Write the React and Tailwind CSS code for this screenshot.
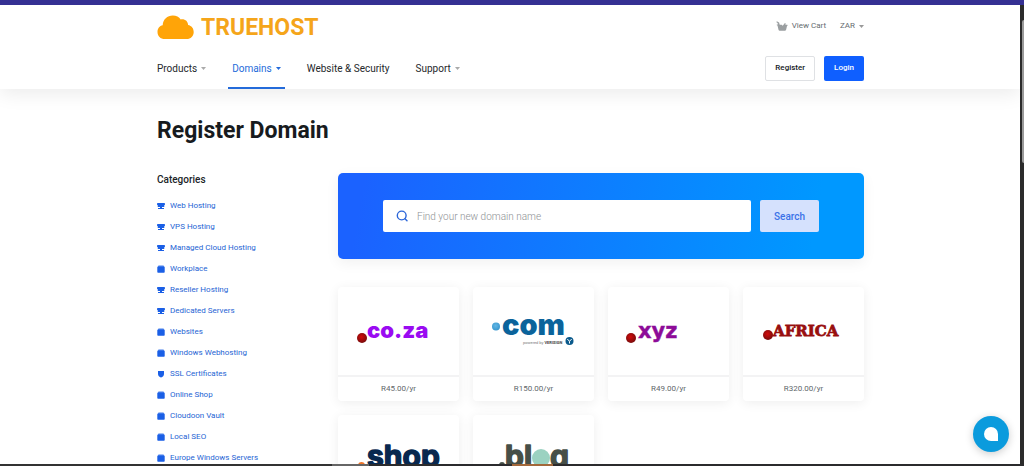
import React from "react";

const navItems = [
  { label: "Products", menu: true },
  { label: "Domains", menu: true, active: true },
  { label: "Website & Security" },
  { label: "Support", menu: true },
];

const categories = [
  { label: "Web Hosting", icon: "server" },
  { label: "VPS Hosting", icon: "server" },
  { label: "Managed Cloud Hosting", icon: "server" },
  { label: "Workplace", icon: "box" },
  { label: "Reseller Hosting", icon: "server" },
  { label: "Dedicated Servers", icon: "server" },
  { label: "Websites", icon: "box" },
  { label: "Windows Webhosting", icon: "box" },
  { label: "SSL Certificates", icon: "shield" },
  { label: "Online Shop", icon: "box" },
  { label: "Cloudoon Vault", icon: "box" },
  { label: "Local SEO", icon: "box" },
  { label: "Europe Windows Servers", icon: "box" },
];

function Caret({ className }) {
  return (
    <svg viewBox="0 0 5 3" className={`h-[3px] w-[5px] shrink-0 ${className}`} aria-hidden="true">
      <path d="M0 0h5L2.5 3z" fill="currentColor" />
    </svg>
  );
}

function CategoryIcon({ type }) {
  return (
    <svg viewBox="0 0 8 8" className="size-2 shrink-0" fill="#1a5fe6" aria-hidden="true">
      {type === "server" && (
        <>
          <rect x="0" y="1" width="8" height="2" rx="0.4" />
          <path d="M.7 3h6.600v1.500a.5.5 0 0 1-.5.5H5v1h2v1H1V6h2V5H1.200a.5.5 0 0 1-.5-.5z" />
        </>
      )}
      {type === "box" && (
        <>
          <path d="M1.500.5h5l1 1.400h-7z" opacity="0.8" />
          <rect x="0.3" y="1.8" width="7.4" height="5.900" rx="0.7" />
        </>
      )}
      {type === "shield" && <path d="M1 1h6v2.900c0 1.700-1.300 2.900-3 3.700C2.300 6.800 1 5.600 1 3.900z" />}
    </svg>
  );
}

function Ball({ id, cx, cy, r, from, to }) {
  return (
    <>
      <defs>
        <radialGradient id={id} cx="0.45" cy="0.4" r="0.6">
          <stop offset="0" stopColor={from} />
          <stop offset="1" stopColor={to} />
        </radialGradient>
      </defs>
      <circle cx={cx} cy={cy} r={r} fill={`url(#${id})`} />
    </>
  );
}

function CoZaLogo() {
  return (
    <>
      <Ball id="ball-coza" cx="24" cy="51" r="5" from="#d30b0b" to="#780c0c" />
      <text x="29" y="51" fontFamily="Inter, sans-serif" fontWeight="900" fontSize="22" fill="#9a0bf2">co.za</text>
    </>
  );
}

function ComLogo() {
  return (
    <>
      <Ball id="ball-com" cx="23" cy="39.500" r="4" from="#62b7e5" to="#3997ce" />
      <text x="29" y="48" fontFamily="Inter, sans-serif" fontWeight="900" fontSize="29" fill="#0b639b">com</text>
      <text x="50" y="57" fontFamily="Roboto, sans-serif" fontSize="4" fill="#777">
        powered by <tspan fontWeight="700" fill="#444">VERISIGN</tspan>
      </text>
      <circle cx="96.500" cy="54" r="4" fill="#0b5a8c" />
      <path d="M94.300 52l2.200 2.300 2.200-2.300M96.500 54.300v2.200" stroke="#fff" strokeWidth="1" fill="none" />
    </>
  );
}

function XyzLogo() {
  return (
    <>
      <Ball id="ball-xyz" cx="23" cy="51" r="5" from="#d30b0b" to="#780c0c" />
      <text x="30" y="51" fontFamily="DejaVu Sans, sans-serif" fontWeight="700" fontSize="21" fill="#8d0b98" stroke="#8d0b98" strokeWidth="0.4">xyz</text>
    </>
  );
}

function AfricaLogo() {
  return (
    <>
      <Ball id="ball-africa" cx="25" cy="48" r="5" from="#d30b0b" to="#780c0c" />
      <text x="30" y="49" fontFamily="DejaVu Serif, serif" fontWeight="700" fontSize="15" fill="#980f0f" stroke="#980f0f" strokeWidth="0.8">AFRICA</text>
    </>
  );
}

function ShopLogo() {
  return (
    <>
      <circle cx="23.500" cy="50.500" r="3.500" fill="#ee7428" />
      <text x="29" y="52" fontFamily="Inter, sans-serif" fontWeight="700" fontSize="30" fill="#08284f" stroke="#08284f" strokeWidth="1.400" strokeLinejoin="round">shop</text>
    </>
  );
}

function BlogLogo() {
  return (
    <>
      <circle cx="29" cy="50" r="3" fill="#464f47" />
      <g fontFamily="Inter, sans-serif" fontWeight="700" fontSize="30" fill="#464f47" stroke="#464f47" strokeWidth="1.400" strokeLinejoin="round">
        <text x="32" y="52">bl</text>
        <text x="77" y="52">g</text>
      </g>
      <circle cx="68" cy="43" r="9" fill="#9bd2c1" />
    </>
  );
}

const domains = [
  { name: ".co.za", price: "R45.00/yr", Logo: CoZaLogo },
  { name: ".com", price: "R150.00/yr", Logo: ComLogo },
  { name: ".xyz", price: "R49.00/yr", Logo: XyzLogo },
  { name: ".africa", price: "R320.00/yr", Logo: AfricaLogo },
  { name: ".shop", price: "", Logo: ShopLogo },
  { name: ".blog", price: "", Logo: BlogLogo },
];

function Header() {
  return (
    <header className="relative bg-white shadow-[0_5px_18px_rgba(0,0,0,0.08)]">
      <div className="mx-auto w-full max-w-[708px] pl-px">
        <div className="flex h-[42px] items-center justify-between">
          <a href="#home" className="flex items-center gap-[7px] pt-0.5 text-[#f5a51a]">
            <svg viewBox="0 0 37 24" className="h-6 w-[37px]" aria-hidden="true">
              <path
                d="M8 24C3.300 24 .5 21 .5 16.900c0-3.500 2-6.100 5.200-6.700C6 4.400 10.300.5 15.800.5c3.500 0 6.300 1.400 7.900 3.900 4-.9 7.300 1.700 7.400 5.600 3.500.7 5.600 3.400 5.600 6.900 0 4.100-2.900 7.100-7.200 7.100z"
                fill="#ffa408"
              />
            </svg>
            <span className="pt-0.5 font-[Roboto,sans-serif] text-[23px] leading-6 font-bold">TRUEHOST</span>
          </a>
          <div className="flex items-center gap-3.5 text-[8px] text-[#666c70]">
            <a href="#cart" className="flex items-center gap-1">
              <svg viewBox="0 0 12 10" className="h-2.5 w-3" fill="#9b9fa1" aria-hidden="true">
                <path d="M.8.3l2.300 1.200.6 2.300h2l1 .9 2.200-2.600 1 .7-.7 1h2.200l.2 1-.6.300-.9 3.700a1.300 1.300 0 0 1-1.200.9H3.700a1.300 1.300 0 0 1-1.200-.9L1.500 4.600l-.7-.3v-.9h1.100L1.600 2.100.4 1.300z" />
              </svg>
              View Cart
            </a>
            <button type="button" className="flex items-center gap-1">
              ZAR
              <Caret className="text-[#999]" />
            </button>
          </div>
        </div>
        <div className="flex h-[42px] items-stretch justify-between">
          <nav className="-ml-1 flex gap-[18px] text-[10px] text-[#25282b]">
            {navItems.map((item) => (
              <a
                key={item.label}
                href="#nav"
                className={
                  item.active
                    ? "flex items-center gap-1 border-y-2 border-t-transparent border-b-[#246bda] px-1 text-[#246bda]"
                    : "flex items-center gap-1 border-y-2 border-transparent px-1"
                }
              >
                {item.label}
                {item.menu && <Caret className={item.active ? "text-[#246bda]" : "text-[#aaa]"} />}
              </a>
            ))}
          </nav>
          <div className="flex items-center gap-[9px] text-[8px] font-medium">
            <button type="button" className="h-[25px] rounded-xs border border-[#dfe1e4] px-[9px] text-[#151a1e]">
              Register
            </button>
            <button type="button" className="h-[25px] rounded-xs bg-[#0f5fff] px-2.5 text-white">
              Login
            </button>
          </div>
        </div>
      </div>
    </header>
  );
}

function SearchBanner() {
  return (
    <form
      onSubmit={(event) => event.preventDefault()}
      className="flex items-center gap-[9px] rounded-[5px] bg-linear-[100deg,#1b62ff_5%,#0098ff_90%] px-[45px] py-[27px] shadow-[0_4px_14px_rgba(0,0,0,0.06)]"
    >
      <label className="flex h-8 min-w-0 flex-1 items-center gap-2 rounded-xs bg-white px-[13px]">
        <svg viewBox="0 0 13 13" className="size-[13px] shrink-0" fill="none" stroke="#2b66d9" strokeWidth="1.400" aria-hidden="true">
          <circle cx="5.700" cy="5.500" r="4.400" />
          <path d="M9 8.700l2 2" strokeLinecap="round" />
        </svg>
        <input
          type="text"
          aria-label="Domain name"
          placeholder="Find your new domain name"
          className="min-w-0 flex-1 bg-transparent text-[10px] font-light text-[#25282b] outline-none placeholder:text-[#8e9194]"
        />
      </label>
      <button type="submit" className="h-8 w-[59px] rounded-xs bg-[#d5e1fd] text-[10px] font-medium text-[#3b72e8]">
        Search
      </button>
    </form>
  );
}

export default function App() {
  return (
    <div className="flex h-screen flex-col overflow-hidden bg-white font-[Roboto,sans-serif]">
      <div className="h-[5px] shrink-0 bg-[#353093]" />
      <div className="relative flex min-h-0 flex-1">
        <div className="min-w-0 flex-1 overflow-hidden">
          <Header />
          <main className="mx-auto w-full max-w-[708px] pt-7 pl-px">
            <h1 className="text-[23px] leading-7 font-bold text-[#171b1e]">Register Domain</h1>
            <div className="mt-7 flex">
              <aside className="w-[181px] shrink-0">
                <h2 className="text-[10px] leading-[14px] font-medium text-[#202427]">Categories</h2>
                <ul className="mt-2">
                  {categories.map((category) => (
                    <li key={category.label}>
                      <a href="#category" className="flex h-[21px] items-center gap-[5px] text-[8px] text-[#2564d4]">
                        <CategoryIcon type={category.icon} />
                        {category.label}
                      </a>
                    </li>
                  ))}
                </ul>
              </aside>
              <div className="min-w-0 flex-1">
                <SearchBanner />
                <ul className="mt-7 grid grid-cols-4 gap-3.5">
                  {domains.map(({ name, price, Logo }) => (
                    <li key={name} className="rounded-sm bg-white shadow-[0_2px_12px_rgba(0,0,0,0.07)]">
                      <svg viewBox="0 0 121 88" className="block h-[88px] w-full" role="img" aria-label={name}>
                        <Logo />
                      </svg>
                      <p className="flex h-[26px] items-center justify-center border-t-2 border-[#f3f3f4] text-[8px] text-[#62676b]">
                        {price}
                      </p>
                    </li>
                  ))}
                </ul>
              </div>
            </div>
          </main>
        </div>
        <div className="flex w-1 shrink-0 flex-col bg-[#2b2b2b] pt-[15px] pl-0.5">
          <div className="h-[143px] rounded-l-xs bg-[#9a9a9a]" />
        </div>
        <button
          type="button"
          aria-label="Open chat"
          className="absolute right-[15px] bottom-3 flex size-9 items-center justify-center rounded-full bg-[#0b9bdd] shadow-[0_2px_8px_rgba(0,0,0,0.2)]"
        >
          <span className="size-3.5 rounded-full rounded-br-xs bg-white" />
        </button>
      </div>
      <div className="flex h-0.5 shrink-0 bg-[#2b2b2d]">
        <div className="w-[36%] bg-linear-[90deg,#333_90%,#666_90%]" />
        <div className="w-[14%]" />
        <div className="w-[4%] bg-[#a3683a]" />
      </div>
    </div>
  );
}
